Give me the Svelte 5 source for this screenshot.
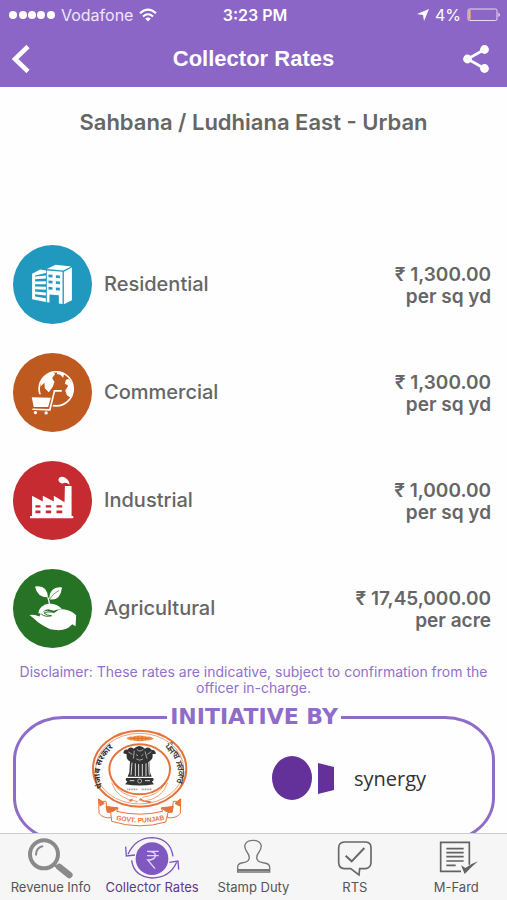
<script>
  const place = "Sahbana / Ludhiana East - Urban";

  const rates = [
    { id: "residential", name: "Residential", price: "1,300.00", unit: "per sq yd" },
    { id: "commercial", name: "Commercial", price: "1,300.00", unit: "per sq yd" },
    { id: "industrial", name: "Industrial", price: "1,000.00", unit: "per sq yd" },
    { id: "agricultural", name: "Agricultural", price: "17,45,000.00", unit: "per acre" },
  ];

  const tabs = [
    { id: "revenue", name: "Revenue Info" },
    { id: "rates", name: "Collector Rates" },
    { id: "stamp", name: "Stamp Duty" },
    { id: "rts", name: "RTS" },
    { id: "fard", name: "M-Fard" },
  ];

  let active = $state("rates");
</script>

<div class="app">
  <header>
    <div class="status">
      <div class="carrier">
        <svg width="46" height="10" viewBox="0 0 46 10" fill="#fff" aria-hidden="true">
          {#each [4, 14, 23, 32, 42] as cx}
            <circle {cx} cy="5" r="4" />
          {/each}
        </svg>
        <span>Vodafone</span>
        <svg width="18" height="14" viewBox="0 0 18 14" fill="none" stroke="#fff" stroke-width="2" aria-hidden="true">
          <path d="M1 5.2Q9-2 17 5.2M4 8.4Q9 4 14 8.4" />
          <path d="M6.2 10.6Q9 8.2 11.8 10.6L9 13.4Z" fill="#fff" stroke="none" />
        </svg>
      </div>
      <span class="clock">3:23 PM</span>
      <div class="power">
        <svg width="12" height="12" viewBox="0 0 12 12" fill="#fff" aria-hidden="true">
          <path d="M12 0L7 12L6 6L0 5Z" />
        </svg>
        <span>4%</span>
        <svg width="34" height="14" viewBox="0 0 34 14" aria-hidden="true">
          <rect x="1" y="1" width="29" height="11.5" rx="1.5" fill="none" stroke="#e6dbf5" />
          <rect x="1.6" y="2" width="2" height="9.5" fill="#f0b57c" />
          <path d="M31.5 4.5Q34 6.8 31.5 9Z" fill="#fff" />
        </svg>
      </div>
    </div>
    <nav class="bar">
      <button aria-label="Back">
        <svg width="18" height="28" viewBox="0 0 18 28" fill="none" stroke="#fff" stroke-width="4.6">
          <path d="M16 1.5L3 14L16 26.5" />
        </svg>
      </button>
      <h1>Collector Rates</h1>
      <button class="share" aria-label="Share">
        <svg width="26" height="28" viewBox="0 0 26 28" fill="#fff">
          <path d="M21.5 4.5L4.5 14L21.5 23.5" fill="none" stroke="#fff" stroke-width="2.6" />
          <circle cx="21.5" cy="4.5" r="4.4" />
          <circle cx="4.5" cy="14" r="4.4" />
          <circle cx="21.5" cy="23.5" r="4.4" />
        </svg>
      </button>
    </nav>
  </header>

  <main>
    <h2>{place}</h2>

    <ul class="rates">
      {#each rates as rate}
        <li>
          <span class="badge {rate.id}">
            {#if rate.id === "residential"}
              <svg viewBox="40 28 236 236" fill="#fff" aria-hidden="true">
                <path d="M97 114L121 101L139 104V112L106 119V189L138 192V198L97 190Z" />
                <path d="M106 122L138 119V128L106 130ZM106 137L138 136V145L106 145ZM106 152L138 153V162L106 160ZM106 167L138 170V179L106 175ZM106 182L138 187V194L106 189Z" />
                <path d="M141 100L167 87L214 92L190 104Z" />
                <path fill-rule="evenodd" d="M141 104L188 108V204L177 203V178L149 176V200L141 199ZM146 116V124L158 125V117ZM168 118V126L180 127V119ZM146 134V142L158 143V135ZM168 136V144L180 145V137ZM146 153V161L158 162V154ZM168 155V163L180 164V156Z" />
                <path d="M192 108L216 95V193L192 205Z" />
              </svg>
            {:else if rate.id === "commercial"}
              <svg viewBox="40 351 236 236" fill="#fff" aria-hidden="true">
                <circle cx="169" cy="458" r="51" fill="none" stroke="#fff" stroke-width="5" />
                <path d="M124 435L137 417L158 408L166 414L157 426L164 438L158 453L147 468L135 456L134 440L122 451Z" />
                <path d="M172 406L193 411L190 425L181 416L171 414ZM198 431L207 429L216 441L221 464L211 484L201 477L196 463L205 449L195 443Z" />
                <path d="M155 460L192 452V470L168 477L158 512L143 506Z" fill="#be5a20" />
                <path d="M112 474H150L140 516H104Z" fill="#be5a20" />
                <path d="M184 464L164 464L150 521L100 519" fill="none" stroke="#fff" stroke-width="5" stroke-linecap="round" />
                <path d="M96 483L153 485L145 512L102 512Z" />
                <circle cx="107" cy="529" r="5" />
                <circle cx="139" cy="530" r="5" />
              </svg>
            {:else if rate.id === "industrial"}
              <svg viewBox="40 30 236 236" fill="#fff" aria-hidden="true">
                <path fill-rule="evenodd" d="M97 134L129 151V134L162 151V134L194 153L195 105H215V194H220V201H91V194H97ZM107 162V169H122V162ZM138 162V169H154V162ZM170 162V169H187V162ZM107 178V186H122V178ZM138 178V186H154V178ZM170 178V186H187V178Z" />
                <path d="M209 101Q208 87 197 81Q187 74 179 79Q172 86 180 94Q187 100 193 95Q202 94 209 101Z" />
              </svg>
            {:else}
              <svg viewBox="38 352 240 240" fill="#fff" aria-hidden="true">
                <path d="M105 405Q142 399 144 438Q111 438 105 405ZM187 408Q149 405 148 444Q181 451 187 408Z" />
                <path d="M144 438L149 457" fill="none" stroke="#fff" stroke-width="4" />
                <path d="M148 446Q158 426 178 417" fill="none" stroke="#267326" stroke-width="2" />
                <path d="M115 486Q118 463 147 457Q176 458 188 476Q174 473 162 479L145 474Q132 475 123 489Z" />
                <path d="M88 492Q104 489 118 496Q124 480 143 479Q151 483 165 484Q178 472 196 475Q219 480 230 493L228 526L218 520Q203 538 176 538L151 535Q119 521 104 505Z" />
                <path d="M124 489Q136 499 155 494Q143 494 132 486Q141 480 164 484" fill="none" stroke="#267326" stroke-width="3" />
              </svg>
            {/if}
          </span>
          <span class="name">{rate.name}</span>
          <span class="price">₹ {rate.price}<br />{rate.unit}</span>
        </li>
      {/each}
    </ul>

    <p class="disclaimer">
      Disclaimer: These rates are indicative, subject to confirmation from the officer in-charge.
    </p>

    <fieldset>
      <legend>INITIATIVE BY</legend>
      <div class="partners">
        <!-- Govt. of Punjab seal -->
        <svg class="seal" viewBox="30 15 291 294" role="img" aria-label="Government of Punjab">
          <defs>
            <path id="seal-left" d="M65 190Q37 122 100 68" />
            <path id="seal-right" d="M251 68Q315 122 280 198" />
            <path id="seal-ribbon" d="M105 287Q176 304 247 287" />
          </defs>
          <g fill="none" stroke="#e6743a">
            <ellipse cx="176" cy="134" rx="140" ry="114" stroke-width="6" />
            <ellipse cx="176" cy="134" rx="132" ry="106" stroke-width="2" />
            <ellipse cx="176" cy="136" rx="91" ry="75" stroke-width="6" />
            <path d="M100 180Q120 214 168 220M252 180Q232 214 184 220M92 176Q108 226 168 232M260 176Q244 226 184 232" stroke-width="2" />
          </g>
          <path d="M136 43Q145 35 155 38Q176 31 197 38Q208 35 219 44Q207 51 197 49Q176 55 155 49Q143 51 136 43Z" fill="#ed9447" />
          <path d="M148 43H206M160 38V49M171 36V51M183 36V51M194 38V49" stroke="#d9702b" stroke-width="3" />
          <path d="M143 230L156 222L151 234ZM170 234L178 222L190 230L212 232L206 238L176 229L160 238Z" fill="#e6743a" />

          <!-- lion capital -->
          <g fill="#333">
            <path d="M127 88Q128 75 139 77Q148 65 158 74Q176 58 192 74Q203 66 211 77Q223 77 225 89L214 91Q218 104 205 112L207 145L212 158H140L145 145L147 112Q135 107 137 91Z" />
            <path d="M136 162H216Q221 168 213 173L219 181Q176 188 132 181L139 173Q131 168 136 162Z" />
          </g>
          <g fill="none" stroke="#ddd" stroke-width="3">
            <path d="M153 116L150 154M163 118V156M173 120V156M184 120V156M195 118V156M203 114L205 154" />
            <path d="M142 84L154 91M160 80L157 104M167 76Q176 86 187 76M192 82L198 104M199 91L211 83M165 91L171 96M187 91L181 96M166 105Q176 112 186 105" stroke-width="2" />
            <circle cx="176" cy="171" r="6" stroke-width="2" />
            <path d="M146 170H160M192 170H207" />
          </g>
          <path d="M139 196H170M182 196H213" stroke="#999" stroke-width="5" stroke-dasharray="3 2" />

          <g class="script">
            <text><textPath href="#seal-left">पंजाब सरकार</textPath></text>
            <text><textPath href="#seal-right">ਪੰਜਾਬ ਸਰਕਾਰ</textPath></text>
          </g>

          <g stroke="#e6743a" stroke-width="3" fill="#fff">
            <path d="M53 225Q62 236 75 232L79 263L94 267L92 281Q66 284 54 268ZM299 225Q290 236 277 232L273 263L258 267L260 281Q286 284 298 268Z" />
            <path d="M88 254Q98 247 111 252L107 262Q176 279 245 262L241 252Q254 247 264 254L254 294Q176 318 92 292Z" />
            <path d="M53 225L70 238L57 246ZM299 225L282 238L295 246ZM75 247L111 252L97 262L79 265ZM277 247L241 252L255 262L273 265Z" fill="#e6743a" />
          </g>
          <text class="motto"><textPath href="#seal-ribbon">GOVT. PUNJAB</textPath></text>
        </svg>

        <div class="synergy">
          <svg width="62" height="44" viewBox="0 0 62 44" fill="#64309a" aria-hidden="true">
            <ellipse cx="20" cy="22" rx="20" ry="22" />
            <path d="M46 7L62 11V34L46 38Z" />
          </svg>
          <span>synergy</span>
        </div>
      </div>
    </fieldset>
  </main>

  <nav class="tabs">
    {#each tabs as tab}
      <button class:active={active === tab.id} onclick={() => (active = tab.id)}>
        {#if tab.id === "revenue"}
          <svg viewBox="75 32 168 132" fill="none" stroke="#8a8a8a" aria-hidden="true">
            <circle cx="138" cy="90" r="42" stroke-width="12" />
            <path d="M114 91Q115 70 133 66" stroke-width="6" stroke-linecap="round" />
            <path d="M168 120L178 129" stroke-width="8" />
            <path d="M184 128L214 152" stroke-width="20" stroke-linecap="round" />
          </svg>
        {:else if tab.id === "rates"}
          <svg viewBox="373 34 168 132" fill="none" stroke="#7e57bd" stroke-width="4" aria-hidden="true">
            <circle cx="457" cy="105" r="49" fill="#8059c0" stroke="none" />
            <path d="M385 92Q408 42 458 42Q512 45 520 98M378 69L380 97L406 94" />
            <path d="M531 116Q510 163 457 163Q402 158 396 110M537 138L535 112L509 116" />
            <path d="M442 83H477M442 96H477M442 83Q468 83 467 96Q466 109 444 109L466 135" stroke="#e4d8f5" />
          </svg>
        {:else if tab.id === "stamp"}
          <svg viewBox="0 0 168 132" fill="none" stroke="#777" stroke-width="4" aria-hidden="true">
            <path d="M38 111V97Q38 86 50 84Q68 82 72 73Q75 63 66 51Q56 37 61 27Q67 16 84 16Q101 16 107 27Q112 37 102 51Q93 63 96 73Q100 82 118 84Q134 86 134 97V111Z" />
            <path d="M39 105H133" stroke-width="6" />
          </svg>
        {:else if tab.id === "rts"}
          <svg viewBox="222 34 168 132" fill="none" stroke="#686868" stroke-width="5" aria-hidden="true">
            <path d="M274 55H338Q354 56 354 72V117Q353 133 338 135H320L318 154L293 135H274Q258 134 257 117V72Q258 56 274 55Z" />
            <path d="M278 96L296 113L334 73" stroke-width="6" />
          </svg>
        {:else}
          <svg viewBox="524 34 168 132" fill="none" stroke="#626262" stroke-width="5" aria-hidden="true">
            <path d="M648 123V56H562V143H623" />
            <path d="M579 75H631M579 87H631M579 99H631M579 112H631M579 125H607" />
            <path d="M623 125L636 133Q654 120 674 113Q654 130 634 151Z" fill="#626262" stroke="none" />
          </svg>
        {/if}
        <span>{tab.name}</span>
      </button>
    {/each}
  </nav>
</div>

<style>
  :global(body) {
    margin: 0;
    background: #fefefe;
  }

  .app {
    display: flex;
    flex-direction: column;
    height: 100vh;
    font-family: Inter, "Noto Sans", sans-serif;
    color: #666;
  }

  button {
    padding: 0;
    border: 0;
    background: none;
    font: inherit;
    color: inherit;
    cursor: pointer;
  }

  svg {
    display: block;
  }

  header {
    flex: none;
    background: #8b66c6;
    color: #fff;
  }

  .status {
    display: grid;
    grid-template-columns: 1fr auto 1fr;
    align-items: center;
    height: 30px;
    padding: 0 6px 0 9px;
    font-size: 16px;
  }
  .carrier,
  .power {
    display: flex;
    align-items: center;
    gap: 6px;
  }
  .carrier {
    color: #eee6f8;
  }
  .power {
    justify-content: flex-end;
  }
  .clock {
    font-weight: 600;
  }

  .bar {
    display: grid;
    grid-template-columns: 1fr auto 1fr;
    align-items: center;
    justify-items: start;
    height: 57px;
    padding: 0 12px;
  }
  .share {
    justify-self: end;
    padding-right: 6px;
  }
  h1 {
    margin: 0;
    font: bold 22px "Liberation Sans", sans-serif;
  }

  main {
    flex: 1;
    min-height: 0;
    overflow-y: auto;
    scrollbar-width: none;
  }

  h2 {
    margin: 0;
    padding: 20px 12px 80px;
    font-size: 22px;
    line-height: 30px;
    font-weight: 600;
    text-align: center;
  }

  .rates {
    margin: 0;
    padding: 13px 16px 0 13px;
    list-style: none;
  }
  .rates li {
    display: flex;
    align-items: center;
    gap: 12px;
    height: 108px;
    font-size: 20px;
    font-weight: 500;
  }
  .badge {
    width: 79px;
    height: 79px;
    border-radius: 50%;
    overflow: hidden;
  }
  .residential {
    background: #2199bf;
  }
  .commercial {
    background: #be5a20;
  }
  .industrial {
    background: #c52b30;
  }
  .agricultural {
    background: #267326;
  }
  .name {
    flex: 1;
  }
  .price {
    padding-top: 3px;
    font-size: 19px;
    line-height: 22px;
    font-weight: 600;
    text-align: right;
  }

  .disclaimer {
    margin: 0;
    padding: 2px 16px 0;
    font-size: 14px;
    line-height: 16px;
    text-align: center;
    color: #9270cc;
  }

  fieldset {
    margin: 9px 12px 12px 13px;
    padding: 0 0 12px;
    border: 3px solid #8e6cc8;
    border-radius: 50px / 44px;
  }
  legend {
    margin: 0 auto;
    padding: 0 3px;
    font: bold 22px/24px "DejaVu Sans", sans-serif;
    color: #8e6cc8;
  }
  .partners {
    display: grid;
    grid-template-columns: 1fr 1fr;
    align-items: center;
    justify-items: center;
    padding: 0 38px 0 18px;
  }
  .seal {
    width: 97px;
    height: 98px;
  }
  .script {
    font: bold 25px "Noto Sans", sans-serif;
    fill: #333;
  }
  .motto {
    font: bold 20px "Liberation Sans", sans-serif;
    fill: #e6743a;
  }
  .synergy {
    display: flex;
    align-items: center;
    gap: 20px;
    font: 20px "Open Sans", sans-serif;
    color: #333;
  }

  .tabs {
    flex: none;
    display: grid;
    grid-template-columns: repeat(5, 1fr);
    height: 66px;
    border-top: 1px solid #ccc;
    background: #f6f6f6;
  }
  .tabs button {
    display: flex;
    flex-direction: column;
    align-items: center;
    padding-top: 1px;
    font-size: 13px;
    line-height: 16px;
    color: #555;
    white-space: nowrap;
  }
  .tabs svg {
    width: 56px;
    height: 44px;
  }
  .tabs .active {
    color: #5b3a91;
  }
</style>
